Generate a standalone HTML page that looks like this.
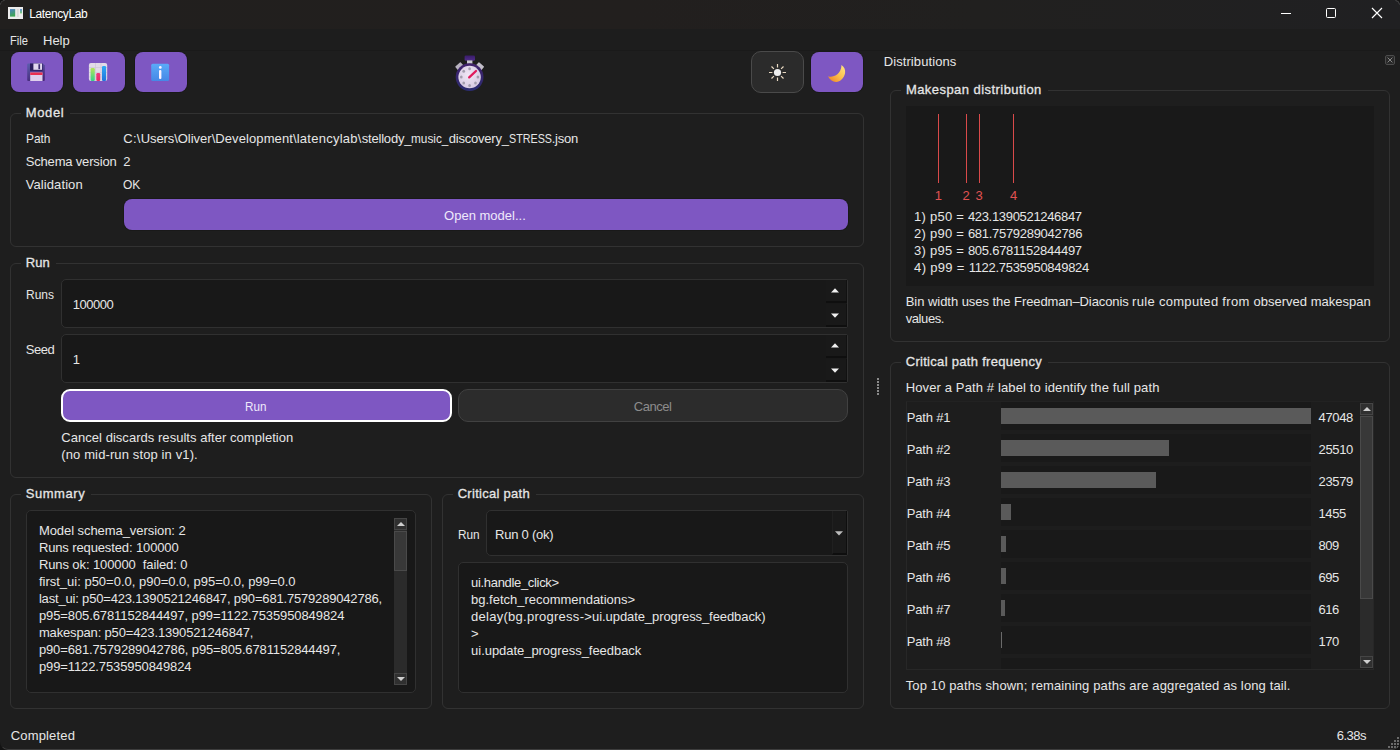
<!DOCTYPE html>
<html lang="en"><head><meta charset="utf-8"><title>LatencyLab</title>
<style>

html,body{margin:0;padding:0;background:#131313;}
body{width:1400px;height:750px;overflow:hidden;position:relative;font:13px/16px "Liberation Sans", sans-serif;color:#e6e6e6;}
#win{position:absolute;left:0;top:0;width:1400px;height:750px;overflow:hidden;background:#1e1e1e;border-radius:5px 5px 8px 8px;}
#win div,#win svg{position:absolute;box-sizing:border-box;}
.t{white-space:pre;height:16px;line-height:16px;}
.gb{border:1px solid #323232;border-radius:6px;}
.gt{background:#1e1e1e;height:4px;}
.pb{background:#7e57c2;border-radius:8px;box-shadow:0 0 0 1px #191919;}
.in{background:#181818;border:1px solid #303030;border-radius:5px;}
.sp{background:#181818;border-left:1px solid #2a2a2a;}
.tr{background:#191919;}
.bar{background:#5a5a5a;}

</style></head>
<body>
<div id="win">
<div class="" style="left:0px;top:0px;width:1400px;height:29px;background:linear-gradient(90deg,#211f1e 0%,#221f1e 45%,#21201f 70%,#202022 100%);"></div>
<div class="" style="left:0px;top:29px;width:1400px;height:22px;background:#1d1d1d;border-bottom:1px solid #1a1a1a;"></div>
<div class="" style="left:0px;top:0px;width:1400px;height:750px;border:1px solid transparent;border-bottom-color:#3d3d3d;border-radius:5px 5px 8px 8px;z-index:50;pointer-events:none;"></div>
<svg style="left:8px;top:7px" width="15" height="12" viewBox="8 7 15 12"><defs><linearGradient id="ig" x1="0" y1="0" x2="0.3" y2="1"><stop offset="0" stop-color="#4c7fc4"/><stop offset="1" stop-color="#3ea552"/></linearGradient><linearGradient id="ig2" x1="0" y1="0" x2="0" y2="1"><stop offset="0" stop-color="#5b8fd6"/><stop offset="1" stop-color="#7ccf72"/></linearGradient></defs><rect x="8" y="7" width="15" height="12" fill="#ececec"/><rect x="10" y="9.100" width="5.200" height="7.500" fill="url(#ig)"/><rect x="16.800" y="9" width="2" height="8" fill="#d9d9d9"/><rect x="20" y="9.100" width="2" height="4.300" fill="url(#ig2)"/></svg>
<svg style="left:0;top:0;z-index:60" width="6" height="6" viewBox="0 0 6 6"><path d="M0.500 4.500A4 4 0 0 1 4.500 0.500" stroke="#4e4e4e" fill="none"/></svg>
<svg style="left:1394px;top:0;z-index:60" width="6" height="6" viewBox="0 0 6 6"><path d="M1.500 0.500A4 4 0 0 1 5.500 4.500" stroke="#4e4e4e" fill="none"/></svg>
<svg style="left:1270px;top:0" width="130" height="29" viewBox="0 0 130 29" fill="none" stroke="#ffffff" stroke-width="1"><path d="M11 13.5h10"/><rect x="56.5" y="8.5" width="9" height="9" rx="1"/><path d="M102 8l10 10M112 8l-10 10" stroke-width="1.15"/></svg>
<div class="pb" style="left:11px;top:52px;width:52px;height:40px;"></div>
<div class="pb" style="left:73px;top:52px;width:52px;height:40px;"></div>
<div class="pb" style="left:135px;top:52px;width:52px;height:40px;"></div>
<div class="" style="left:751px;top:51px;width:53px;height:42px;background:#2b2b2b;border:1px solid #4a4a4a;border-radius:10px;"></div>
<div class="pb" style="left:811px;top:52px;width:52px;height:40px;"></div>
<svg style="left:24px;top:60px" width="26" height="24" viewBox="24 60 26 24"><defs><linearGradient id="fd" x1="0" y1="0" x2="0.4" y2="1"><stop offset="0" stop-color="#5c5fae"/><stop offset="1" stop-color="#47287a"/></linearGradient></defs><path d="M28.200 63.500H42.800L44.800 65.500V80A1 1 0 0 1 43.800 81H28.200A1 1 0 0 1 27.200 80V64.500A1 1 0 0 1 28.200 63.500Z" fill="url(#fd)"/><rect x="30" y="63.500" width="12.500" height="7.300" fill="#2b1d5c"/><rect x="33.400" y="63.500" width="8.600" height="6.300" fill="#e3d8ef"/><rect x="38.400" y="64.200" width="1.700" height="5" fill="#3a2a6e"/><rect x="30.200" y="72.500" width="12.300" height="8.500" fill="#dfd0ec"/><rect x="30.200" y="72.500" width="12.300" height="2.500" fill="#ea2f4f"/></svg>
<svg style="left:86px;top:60px" width="26" height="24" viewBox="86 60 26 24"><defs><linearGradient id="g1" x1="0" y1="0" x2="0" y2="1"><stop offset="0" stop-color="#b4e657"/><stop offset="1" stop-color="#35d08c"/></linearGradient><linearGradient id="g2" x1="0" y1="0" x2="0" y2="1"><stop offset="0" stop-color="#2fa9f4"/><stop offset="1" stop-color="#1f74dc"/></linearGradient><linearGradient id="g4" x1="0" y1="0" x2="0" y2="1"><stop offset="0" stop-color="#f0387e"/><stop offset="1" stop-color="#e62a62"/></linearGradient></defs><rect x="88.900" y="62.900" width="18.300" height="18.100" rx="2" fill="#e2dbe8"/><path d="M95.500 63v18M101 63v18M89 67.500h18M89 72.500h18M89 77h18" stroke="#cfc7d8" stroke-width="0.700"/><rect x="90.600" y="68" width="4.200" height="13" rx="1.200" fill="url(#g1)"/><rect x="96.300" y="73" width="3.900" height="8" rx="1.200" fill="url(#g4)"/><rect x="102" y="66" width="4.100" height="15" rx="1.200" fill="url(#g2)"/></svg>
<svg style="left:148px;top:60px" width="26" height="24" viewBox="148 60 26 24"><defs><linearGradient id="g3" x1="0" y1="0" x2="0" y2="1"><stop offset="0" stop-color="#5aaaf8"/><stop offset="1" stop-color="#4688e6"/></linearGradient></defs><rect x="151.200" y="63.800" width="17.900" height="17.100" rx="1.500" fill="url(#g3)"/><rect x="159" y="70" width="2.400" height="9" rx="1" fill="#fdf3ff"/><circle cx="160.300" cy="67.400" r="1.350" fill="#fdf3ff"/></svg>
<svg style="left:450px;top:52px" width="40" height="42" viewBox="450 52 40 42"><defs><linearGradient id="sw1" x1="0" y1="0" x2="0" y2="1"><stop offset="0" stop-color="#42216b"/><stop offset="1" stop-color="#2a2c70"/></linearGradient><radialGradient id="sw2" cx="0.45" cy="0.4" r="0.7"><stop offset="0" stop-color="#f0e6f5"/><stop offset="1" stop-color="#d3c6e0"/></radialGradient><linearGradient id="sw3" x1="0" y1="0" x2="0" y2="1"><stop offset="0" stop-color="#391b6a"/><stop offset="1" stop-color="#4f2d88"/></linearGradient></defs><rect x="464.6" y="55.4" width="10.4" height="5.4" rx="1.3" fill="url(#sw3)"/><rect x="467" y="60.4" width="5.4" height="3.4" fill="#cbc8d1"/><rect x="-3.6" y="-2.4" width="7.2" height="4.8" rx="0.8" fill="#b7b2bf" transform="translate(459.3 66.2) rotate(-40)"/><rect x="-3.6" y="-2.4" width="7.2" height="4.8" rx="0.8" fill="#c3bfca" transform="translate(480 66.2) rotate(40)"/><circle cx="469.6" cy="77.1" r="13.9" fill="url(#sw1)"/><circle cx="469.6" cy="77.1" r="11.25" fill="url(#sw2)"/><g fill="#a39dad"><ellipse cx="469.60" cy="68.80" rx="1.35" ry="1.5"/><ellipse cx="477.90" cy="77.10" rx="1.35" ry="1.5"/><ellipse cx="469.60" cy="85.40" rx="1.35" ry="1.5"/><ellipse cx="461.30" cy="77.10" rx="1.35" ry="1.5"/><ellipse cx="475.47" cy="82.97" rx="1.35" ry="1.5"/><ellipse cx="463.73" cy="82.97" rx="1.35" ry="1.5"/><ellipse cx="463.73" cy="71.23" rx="1.35" ry="1.5"/></g><path d="M469.2 77.4L476 71" stroke="#e01a5c" stroke-width="2.3" stroke-linecap="round"/></svg>
<svg style="left:767.5px;top:63.2px" width="19" height="19" viewBox="0 0 19 19"><circle cx="9.5" cy="9.5" r="3.6" fill="#eeeeee"/><g stroke="#e9d9c2" stroke-width="1.2" stroke-linecap="butt"><path d="M9.5 1v3.4M9.5 14.6V18M1 9.5h3.4M14.6 9.5H18M3.5 3.5l2.4 2.4M13.1 13.1l2.4 2.4M3.5 15.5l2.4-2.4M13.1 5.9l2.4-2.4"/></g></svg>
<svg style="left:820px;top:58px" width="36" height="30" viewBox="820 58 36 30"><defs><linearGradient id="gm" x1="0.9" y1="0.1" x2="0.1" y2="0.9"><stop offset="0" stop-color="#ffe07a"/><stop offset="0.5" stop-color="#fbbf4c"/><stop offset="1" stop-color="#f08a2a"/></linearGradient></defs><path d="M841.4 65C844 66.500 845.600 69.500 845.100 73C844.300 78 840 82 836 81.900C832.500 81.800 829.500 79.600 828 76.200C832 77.600 836.500 76 839 72.600C840.800 70 841.500 67.500 841.400 65Z" fill="url(#gm)"/></svg>
<div class="gb" style="left:10px;top:113px;width:854px;height:134px;"></div>
<div class="gt" style="left:21px;top:112px;width:49px;height:4px;"></div>
<div class="gb" style="left:10px;top:263px;width:854px;height:215px;"></div>
<div class="gt" style="left:21px;top:262px;width:35px;height:4px;"></div>
<div class="gb" style="left:10px;top:494px;width:422px;height:215px;"></div>
<div class="gt" style="left:21px;top:493px;width:70px;height:4px;"></div>
<div class="gb" style="left:442px;top:494px;width:422px;height:215px;"></div>
<div class="gt" style="left:453px;top:493px;width:83px;height:4px;"></div>
<div class="gb" style="left:890px;top:90px;width:500px;height:252px;"></div>
<div class="gt" style="left:901px;top:89px;width:146.5999999999999px;height:4px;"></div>
<div class="gb" style="left:890px;top:362px;width:500px;height:347px;"></div>
<div class="gt" style="left:901px;top:361px;width:147px;height:4px;"></div>
<div class="pb" style="left:124px;top:199px;width:724px;height:31px;border-radius:8px;"></div>
<div class="in" style="left:61px;top:279px;width:787px;height:49px;border-top-right-radius:2px;border-bottom-right-radius:2px;"></div>
<div class="" style="left:826px;top:280px;width:21px;height:23px;background:#191919;border-bottom:2px solid #0f0f0f;border-right:1px solid #111;"></div>
<div class="" style="left:826px;top:304px;width:21px;height:23px;background:#191919;border-bottom:2px solid #0f0f0f;border-right:1px solid #111;"></div>
<svg style="left:831px;top:288.2px" width="8" height="5" viewBox="0 0 8 5"><path d="M0 4.5L4 0.3L8 4.5z" fill="#f0f0f0"/></svg>
<svg style="left:831px;top:313.2px" width="8" height="5" viewBox="0 0 8 5"><path d="M0 0.5L4 4.7L8 0.5z" fill="#f0f0f0"/></svg>
<div class="in" style="left:61px;top:334px;width:787px;height:49px;border-top-right-radius:2px;border-bottom-right-radius:2px;"></div>
<div class="" style="left:826px;top:335px;width:21px;height:23px;background:#191919;border-bottom:2px solid #0f0f0f;border-right:1px solid #111;"></div>
<div class="" style="left:826px;top:359px;width:21px;height:23px;background:#191919;border-bottom:2px solid #0f0f0f;border-right:1px solid #111;"></div>
<svg style="left:831px;top:343.2px" width="8" height="5" viewBox="0 0 8 5"><path d="M0 4.5L4 0.3L8 4.5z" fill="#f0f0f0"/></svg>
<svg style="left:831px;top:368.2px" width="8" height="5" viewBox="0 0 8 5"><path d="M0 0.5L4 4.7L8 0.5z" fill="#f0f0f0"/></svg>
<div class="" style="left:61px;top:389px;width:391px;height:33px;background:#7e57c2;border:2px solid #ffffff;border-radius:9px;"></div>
<div class="" style="left:458px;top:389px;width:390px;height:33px;background:#2c2c2c;border:1px solid #414141;border-radius:10px;"></div>
<div class="in" style="left:26px;top:510px;width:390px;height:183px;"></div>
<div class="" style="left:394px;top:518px;width:13px;height:167px;background:#2b2b2b;"></div>
<div class="" style="left:394px;top:518px;width:13px;height:12px;background:#303030;border:1px solid #454545;"></div>
<div class="" style="left:394px;top:673px;width:13px;height:12px;background:#303030;border:1px solid #454545;"></div>
<div class="" style="left:394px;top:531px;width:13px;height:40px;background:#383838;border:1px solid #4a4a4a;"></div>
<svg style="left:396.5px;top:522px" width="8" height="4" viewBox="0 0 8 4"><path d="M0 4L4 0L8 4z" fill="#cfcfcf"/></svg>
<svg style="left:396.5px;top:677px" width="8" height="4" viewBox="0 0 8 4"><path d="M0 0L4 4L8 0z" fill="#cfcfcf"/></svg>
<div class="in" style="left:486px;top:510px;width:362px;height:46px;border-top-right-radius:2px;border-bottom-right-radius:2px;"></div>
<div class="" style="left:832px;top:511px;width:15px;height:44px;background:#1a1a1a;border-right:1px solid #0e0e0e;border-bottom:2px solid #0e0e0e;border-left:1px solid #202020;"></div>
<svg style="left:835px;top:530.8px" width="8" height="5" viewBox="0 0 8 5"><path d="M0 0.3L4 4.6L8 0.3z" fill="#bcbcbc"/></svg>
<div class="in" style="left:458px;top:562px;width:390px;height:131px;"></div>
<svg style="left:877px;top:378px" width="2" height="17" viewBox="0 0 2 17" fill="#8a8a8a"><rect x="0" y="0" width="2" height="2"/><rect x="0" y="3" width="2" height="2"/><rect x="0" y="6" width="2" height="2"/><rect x="0" y="9" width="2" height="2"/><rect x="0" y="12" width="2" height="2"/><rect x="0" y="15" width="2" height="2"/></svg>
<svg style="left:1385px;top:55px" width="10" height="10" viewBox="0 0 10 10"><rect x="0.5" y="0.5" width="9" height="9" rx="1.5" fill="#282828" stroke="#4c4c4c"/><path d="M2.6 2.6l4.8 4.8M7.4 2.6l-4.8 4.8" stroke="#858585" stroke-width="1"/></svg>
<div class="" style="left:906px;top:106px;width:468px;height:180px;background:#191919;"></div>
<div class="" style="left:938px;top:114px;width:1px;height:69px;background:#d94a4a;"></div>
<div class="" style="left:966px;top:114px;width:1px;height:69px;background:#d94a4a;"></div>
<div class="" style="left:979px;top:114px;width:1px;height:69px;background:#d94a4a;"></div>
<div class="" style="left:1013px;top:114px;width:1px;height:69px;background:#d94a4a;"></div>
<div class="" style="left:906px;top:401px;width:468px;height:269px;border:1px solid #272727;border-top-color:#222;background:#1d1d1d;"></div>
<div class="tr" style="left:1001px;top:402px;width:310px;height:28px;"></div>
<div class="tr" style="left:1001px;top:434px;width:310px;height:28px;"></div>
<div class="tr" style="left:1001px;top:466px;width:310px;height:28px;"></div>
<div class="tr" style="left:1001px;top:498px;width:310px;height:28px;"></div>
<div class="tr" style="left:1001px;top:530px;width:310px;height:28px;"></div>
<div class="tr" style="left:1001px;top:562px;width:310px;height:28px;"></div>
<div class="tr" style="left:1001px;top:594px;width:310px;height:28px;"></div>
<div class="tr" style="left:1001px;top:626px;width:310px;height:28px;"></div>
<div class="tr" style="left:1001px;top:658px;width:310px;height:11px;"></div>
<div class="bar" style="left:1001px;top:408px;width:310px;height:16px;"></div>
<div class="bar" style="left:1001px;top:440px;width:168px;height:16px;"></div>
<div class="bar" style="left:1001px;top:472px;width:155px;height:16px;"></div>
<div class="bar" style="left:1001px;top:504px;width:10px;height:16px;"></div>
<div class="bar" style="left:1001px;top:536px;width:5px;height:16px;"></div>
<div class="bar" style="left:1001px;top:568px;width:5px;height:16px;"></div>
<div class="bar" style="left:1001px;top:600px;width:4px;height:16px;"></div>
<div class="bar" style="left:1001px;top:632px;width:1px;height:16px;background:#6a6a6a;"></div>
<div class="" style="left:1360px;top:403px;width:13px;height:265px;background:#2b2b2b;"></div>
<div class="" style="left:1360px;top:403px;width:13px;height:12px;background:#303030;border:1px solid #454545;"></div>
<div class="" style="left:1360px;top:656px;width:13px;height:12px;background:#303030;border:1px solid #454545;"></div>
<div class="" style="left:1360px;top:416px;width:13px;height:183px;background:#383838;border:1px solid #4a4a4a;"></div>
<svg style="left:1362.5px;top:407px" width="8" height="4" viewBox="0 0 8 4"><path d="M0 4L4 0L8 4z" fill="#cfcfcf"/></svg>
<svg style="left:1362.5px;top:660px" width="8" height="4" viewBox="0 0 8 4"><path d="M0 0L4 4L8 0z" fill="#cfcfcf"/></svg>
<svg style="left:1388px;top:737px" width="12" height="12" viewBox="0 0 12 12" fill="#6a6a6a"><rect x="9" y="0" width="2" height="2"/><rect x="6" y="3" width="2" height="2"/><rect x="9" y="3" width="2" height="2"/><rect x="3" y="6" width="2" height="2"/><rect x="6" y="6" width="2" height="2"/><rect x="9" y="6" width="2" height="2"/><rect x="0" y="9" width="2" height="2"/><rect x="3" y="9" width="2" height="2"/><rect x="6" y="9" width="2" height="2"/><rect x="9" y="9" width="2" height="2"/></svg>
<div class="t" style="left:29.2px;top:6.0px;font-size:12px;color:#ffffff;letter-spacing:-0.396px;">LatencyLab</div>
<div class="t" style="left:10.2px;top:32.5px;transform:scaleX(0.8591);transform-origin:0 0;">File</div>
<div class="t" style="left:43.1px;top:32.5px;letter-spacing:-0.050px;">Help</div>
<div class="t" style="left:25.7px;top:104.5px;-webkit-text-stroke:0.28px;letter-spacing:0.645px;">Model</div>
<div class="t" style="left:25.7px;top:254.5px;-webkit-text-stroke:0.28px;letter-spacing:0.070px;">Run</div>
<div class="t" style="left:25.7px;top:485.5px;-webkit-text-stroke:0.28px;letter-spacing:0.562px;">Summary</div>
<div class="t" style="left:457.7px;top:485.5px;-webkit-text-stroke:0.28px;letter-spacing:0.280px;">Critical path</div>
<div class="t" style="left:905.9px;top:81.5px;-webkit-text-stroke:0.28px;letter-spacing:0.447px;">Makespan distribution</div>
<div class="t" style="left:905.7px;top:353.5px;-webkit-text-stroke:0.28px;letter-spacing:0.303px;">Critical path frequency</div>
<div class="t" style="left:25.7px;top:130.5px;transform:scaleX(0.9159);transform-origin:0 0;">Path</div>
<div class="t" style="left:25.7px;top:153.5px;letter-spacing:-0.171px;">Schema version</div>
<div class="t" style="left:25.7px;top:176.5px;letter-spacing:0.095px;">Validation</div>
<div class="t" style="left:123.3px;top:130.5px;"><span style="letter-spacing:0.258px;">C:\</span><span style="letter-spacing:-0.094px;">Users\</span><span style="letter-spacing:0.005px;">Oliver\</span><span style="letter-spacing:0.098px;">Development\</span><span style="letter-spacing:0.259px;">latencylab\</span><span style="letter-spacing:-0.190px;">stellody_</span><span style="display:inline-block;transform:scaleX(0.9080);transform-origin:0 0;margin-right:-3.79px;">music_</span><span style="letter-spacing:-0.214px;">discovery_</span><span style="display:inline-block;transform:scaleX(0.8267);transform-origin:0 0;margin-right:-9.02px;">STRESS</span><span style="letter-spacing:-0.217px;">.json</span></div>
<div class="t" style="left:123.3px;top:153.5px;">2</div>
<div class="t" style="left:123.3px;top:176.5px;transform:scaleX(0.9257);transform-origin:0 0;">OK</div>
<div class="t" style="left:444.1px;top:207.5px;color:#efe9fb;">Open model...</div>
<div class="t" style="left:25.7px;top:286.5px;transform:scaleX(0.9223);transform-origin:0 0;">Runs</div>
<div class="t" style="left:25.7px;top:341.5px;letter-spacing:-0.458px;">Seed</div>
<div class="t" style="left:72.7px;top:296.5px;letter-spacing:-0.478px;">100000</div>
<div class="t" style="left:72.7px;top:351.5px;">1</div>
<div class="t" style="left:245.3px;top:398.5px;color:#efe9fb;transform:scaleX(0.8969);transform-origin:0 0;">Run</div>
<div class="t" style="left:633.7px;top:398.5px;color:#8c8c8c;letter-spacing:-0.434px;">Cancel</div>
<div class="t" style="left:61.3px;top:429.5px;letter-spacing:0.038px;">Cancel discards results after completion</div>
<div class="t" style="left:61.3px;top:446.5px;letter-spacing:0.119px;">(no mid-run stop in v1).</div>
<div class="t" style="left:38.9px;top:522.5px;letter-spacing:-0.061px;">Model schema_version: 2</div>
<div class="t" style="left:38.9px;top:539.5px;letter-spacing:-0.123px;">Runs requested: 100000</div>
<div class="t" style="left:38.9px;top:556.5px;letter-spacing:-0.098px;">Runs ok: 100000  failed: 0</div>
<div class="t" style="left:38.9px;top:573.5px;">first_ui: p50=0.0, p90=0.0, p95=0.0, p99=0.0</div>
<div class="t" style="left:38.9px;top:590.5px;letter-spacing:-0.179px;">last_ui: p50=423.1390521246847, p90=681.7579289042786,</div>
<div class="t" style="left:38.9px;top:607.5px;letter-spacing:-0.095px;">p95=805.6781152844497, p99=1122.7535950849824</div>
<div class="t" style="left:38.9px;top:624.5px;letter-spacing:-0.155px;">makespan: p50=423.1390521246847,</div>
<div class="t" style="left:38.9px;top:641.5px;letter-spacing:-0.126px;">p90=681.7579289042786, p95=805.6781152844497,</div>
<div class="t" style="left:38.9px;top:658.5px;letter-spacing:-0.107px;">p99=1122.7535950849824</div>
<div class="t" style="left:458.0px;top:526.5px;transform:scaleX(0.9095);transform-origin:0 0;">Run</div>
<div class="t" style="left:495.1px;top:526.5px;letter-spacing:-0.234px;">Run 0 (ok)</div>
<div class="t" style="left:471.1px;top:574.5px;letter-spacing:-0.325px;">ui.handle_click&gt;</div>
<div class="t" style="left:471.1px;top:591.5px;letter-spacing:-0.017px;">bg.fetch_recommendations&gt;</div>
<div class="t" style="left:471.1px;top:608.5px;"><span style="letter-spacing:0.264px;">delay(bg.progress-&gt;</span><span style="letter-spacing:-0.079px;">ui.update_progress_feedback)</span></div>
<div class="t" style="left:471.1px;top:625.5px;">&gt;</div>
<div class="t" style="left:471.1px;top:642.5px;letter-spacing:-0.042px;">ui.update_progress_feedback</div>
<div class="t" style="left:10.7px;top:727.5px;letter-spacing:0.166px;">Completed</div>
<div class="t" style="left:1336.7px;top:727.5px;letter-spacing:-0.503px;">6.38s</div>
<div class="t" style="left:883.7px;top:53.5px;letter-spacing:0.089px;">Distributions</div>
<div class="t" style="left:934.8px;top:187.5px;color:#e05252;">1</div>
<div class="t" style="left:962.4px;top:187.5px;color:#e05252;">2</div>
<div class="t" style="left:975.6px;top:187.5px;color:#e05252;">3</div>
<div class="t" style="left:1010.1px;top:187.5px;color:#e05252;">4</div>
<div class="t" style="left:914.1px;top:208.5px;"><span style="letter-spacing:0.235px;">1) p50 = </span><span style="letter-spacing:-0.319px;">423.1390521246847</span></div>
<div class="t" style="left:914.1px;top:225.5px;"><span style="letter-spacing:0.235px;">2) p90 = </span><span style="letter-spacing:-0.294px;">681.7579289042786</span></div>
<div class="t" style="left:914.1px;top:242.5px;"><span style="letter-spacing:0.235px;">3) p95 = </span><span style="letter-spacing:-0.258px;">805.6781152844497</span></div>
<div class="t" style="left:914.1px;top:259.5px;"><span style="letter-spacing:0.324px;">4) p99 = </span><span style="letter-spacing:-0.292px;">1122.7535950849824</span></div>
<div class="t" style="left:905.7px;top:293.5px;"><span style="letter-spacing:-0.038px;">Bin width uses the </span><span style="letter-spacing:-0.109px;">Freedman–Diaconis </span><span style="letter-spacing:0.305px;">rule computed from </span><span style="letter-spacing:0.008px;">observed makespan</span></div>
<div class="t" style="left:905.7px;top:310.5px;letter-spacing:-0.401px;">values.</div>
<div class="t" style="left:905.7px;top:379.5px;letter-spacing:0.129px;">Hover a Path # label to identify the full path</div>
<div class="t" style="left:906.7px;top:409.5px;letter-spacing:-0.171px;">Path #1</div>
<div class="t" style="left:1318.5px;top:409.5px;letter-spacing:-0.339px;">47048</div>
<div class="t" style="left:906.7px;top:441.5px;letter-spacing:-0.171px;">Path #2</div>
<div class="t" style="left:1318.5px;top:441.5px;letter-spacing:-0.339px;">25510</div>
<div class="t" style="left:906.7px;top:473.5px;letter-spacing:-0.171px;">Path #3</div>
<div class="t" style="left:1318.5px;top:473.5px;letter-spacing:-0.339px;">23579</div>
<div class="t" style="left:906.7px;top:505.5px;letter-spacing:-0.171px;">Path #4</div>
<div class="t" style="left:1318.5px;top:505.5px;letter-spacing:-0.374px;">1455</div>
<div class="t" style="left:906.7px;top:537.5px;letter-spacing:-0.171px;">Path #5</div>
<div class="t" style="left:1318.5px;top:537.5px;letter-spacing:-0.452px;">809</div>
<div class="t" style="left:906.7px;top:569.5px;letter-spacing:-0.171px;">Path #6</div>
<div class="t" style="left:1318.5px;top:569.5px;letter-spacing:-0.452px;">695</div>
<div class="t" style="left:906.7px;top:601.5px;letter-spacing:-0.171px;">Path #7</div>
<div class="t" style="left:1318.5px;top:601.5px;letter-spacing:-0.452px;">616</div>
<div class="t" style="left:906.7px;top:633.5px;letter-spacing:-0.171px;">Path #8</div>
<div class="t" style="left:1318.5px;top:633.5px;letter-spacing:-0.452px;">170</div>
<div class="t" style="left:905.7px;top:677.5px;letter-spacing:0.131px;">Top 10 paths shown; remaining paths are aggregated as long tail.</div>
</div>
</body></html>
